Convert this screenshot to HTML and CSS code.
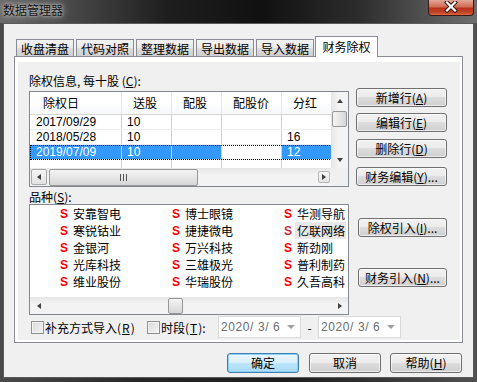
FILE: index.html
```html
<!DOCTYPE html>
<html lang="zh-CN">
<head>
  <meta charset="UTF-8" />
  <title>数据管理器</title>
  <link rel="stylesheet" href="styles.css">
</head>
<body>

<div class="window">
  <div class="titlebar">
    <span class="title">数据管理器</span>
    <div class="close">
      <svg width="14" height="12" viewBox="0 0 14 12">
        <path d="M3 1.5 L11 9.5 M11 1.5 L3 9.5" stroke="#3a1a14" stroke-width="4.2" stroke-linecap="square"/>
        <path d="M3 1.5 L11 9.5 M11 1.5 L3 9.5" stroke="#fff" stroke-width="2.2" stroke-linecap="square"/>
      </svg>
    </div>
  </div>

  <div class="client">
    <div class="tabs">
      <div class="tab">收盘清盘</div>
      <div class="tab">代码对照</div>
      <div class="tab">整理数据</div>
      <div class="tab">导出数据</div>
      <div class="tab">导入数据</div>
      <div class="tab active">财务除权</div>
    </div>

    <div class="pane">
      <div class="panel">
        <div class="main">
          <div class="left">
            <div class="label">除权信息, 每十股 (<u>C</u>):</div>

            <div class="listview">
              <div class="lv-main">
                <div class="lv-content">
                  <div class="lv-row head">
                    <span>除权日</span><span>送股</span><span>配股</span><span>配股价</span><span>分红</span>
                  </div>
                  <div class="lv-row">
                    <span>2017/09/29</span><span>10</span><span></span><span></span><span></span>
                  </div>
                  <div class="lv-row">
                    <span>2018/05/28</span><span>10</span><span></span><span></span><span>16</span>
                  </div>
                  <div class="lv-row sel">
                    <span>2019/07/09</span><span>10</span><span></span><span class="plain"></span><span>12</span>
                  </div>
                  <div class="lv-row">
                    <span></span><span></span><span></span><span></span><span></span>
                  </div>
                </div>
                <div class="vscroll">
                  <div class="sb-btn"><i class="ar-up"></i></div>
                  <div class="thumb-v"></div>
                  <div class="sb-fill"></div>
                  <div class="sb-btn"><i class="ar-down"></i></div>
                </div>
              </div>
              <div class="lv-bottom">
                <div class="hscroll">
                  <div class="sb-btn boxed"><i class="ar-left"></i></div>
                  <div class="thumb-h"><i class="grip"></i></div>
                  <div class="sb-fill"></div>
                  <div class="sb-btn small"><i class="ar-right"></i></div>
                </div>
                <div class="corner"></div>
              </div>
            </div>

            <div class="label second">品种(<u>S</u>):</div>

            <div class="stocklist">
              <div class="sl-items">
                <div class="item"><b>S</b><span>安靠智电</span></div>
                <div class="item"><b>S</b><span>寒锐钴业</span></div>
                <div class="item"><b>S</b><span>金银河</span></div>
                <div class="item"><b>S</b><span>光库科技</span></div>
                <div class="item"><b>S</b><span>维业股份</span></div>
                <div class="item"><b>S</b><span>博士眼镜</span></div>
                <div class="item"><b>S</b><span>捷捷微电</span></div>
                <div class="item"><b>S</b><span>万兴科技</span></div>
                <div class="item"><b>S</b><span>三雄极光</span></div>
                <div class="item"><b>S</b><span>华瑞股份</span></div>
                <div class="item"><b>S</b><span>华测导航</span></div>
                <div class="item hover"><b>S</b><span>亿联网络</span></div>
                <div class="item"><b>S</b><span>新劲刚</span></div>
                <div class="item"><b>S</b><span>普利制药</span></div>
                <div class="item"><b>S</b><span>久吾高科</span></div>
              </div>
              <div class="hscroll flat">
                <div class="sb-btn"><i class="ar-left"></i></div>
                <div class="sb-fill grow1"></div>
                <div class="thumb-small"></div>
                <div class="sb-fill"></div>
                <div class="sb-btn"><i class="ar-right"></i></div>
              </div>
            </div>
          </div>

          <div class="side">
            <div class="btn b1">新增行(<u>A</u>)</div>
            <div class="btn b2">编辑行(<u>E</u>)</div>
            <div class="btn b3">删除行(<u>D</u>)</div>
            <div class="btn b4">财务编辑(<u>Y</u>)...</div>
            <div class="btn b5">除权引入(<u>I</u>)...</div>
            <div class="btn b6">财务引入(<u>N</u>)...</div>
          </div>
        </div>

        <div class="options">
          <label class="check c1"><span class="box"></span>补充方式导入(<u>R</u>)</label>
          <label class="check c2"><span class="box"></span>时段(<u>T</u>):</label>
          <div class="date"><span class="val">2020/ 3/ 6</span><i class="dd"></i></div>
          <span class="dash">-</span>
          <div class="date"><span class="val">2020/ 3/ 6</span><i class="dd"></i></div>
        </div>
      </div>
    </div>

    <div class="actions">
      <div class="btn default">确定</div>
      <div class="btn">取消</div>
      <div class="btn">帮助(<u>H</u>)</div>
    </div>
  </div>
</div>

</body>
</html>
```

FILE: styles.css
```css
body {
  margin: 0;
  background: #1e1e1e;
  font-family: "Noto Sans CJK SC", "Noto Sans", sans-serif;
  font-size: 12px;
  color: #000;
}

u {
  text-decoration: underline;
}

.window {
  width: 477px;
  height: 382px;
  display: flex;
  flex-direction: column;
  background: linear-gradient(to right, #4a4a4a 0%, #262626 30%, #1c1c1c 60%, #505050 100%);
  overflow: hidden;
}

/* title bar */
.titlebar {
  height: 23px;
  display: flex;
  align-items: flex-start;
  background: linear-gradient(to right, #6a6a6a 0%, #4e4e4e 12%, #1e1e1e 35%, #111 55%, #2c2c2c 75%, #6e6e6e 100%);
}

.title {
  padding: 2px 0 0 3px;
  line-height: 16px;
  color: #111;
  text-shadow: 0 0 3px #d0d0d0, 0 0 6px #b0b0b0, 0 0 10px #999;
}

.close {
  margin-left: auto;
  margin-right: 3px;
  width: 46px;
  height: 16px;
  box-sizing: border-box;
  border: 1px solid #3b1a14;
  border-top: none;
  border-radius: 0 0 4px 4px;
  background: linear-gradient(#e2a898 0%, #d06c54 45%, #b8321a 55%, #c24628 85%, #de6a4a 100%);
  display: flex;
  justify-content: center;
  padding-top: 1px;
}

/* client area */
.client {
  margin: 0 3px;
  height: 355px;
  box-sizing: border-box;
  border: 1px solid #5a5a5a;
  background: #f0f0f0;
  display: flex;
  flex-direction: column;
}

.tabs {
  display: flex;
  align-items: flex-end;
  height: 20px;
  margin: 12px 0 0 10px;
  padding-left: 2px;
  position: relative;
  z-index: 1;
}

.tab {
  width: 58px;
  height: 17px;
  margin-right: 2px;
  box-sizing: border-box;
  border: 1px solid #898c95;
  border-bottom: none;
  background: linear-gradient(#f2f2f2, #ebebeb 50%, #dddddd 51%, #cfcfcf);
  text-align: center;
  line-height: 18px;
}

.tab.active {
  width: 63px;
  height: 21px;
  margin-left: -1px;
  margin-bottom: -1px;
  background: #fff;
  line-height: 20px;
}

.pane {
  margin-left: 10px;
  width: 449px;
  height: 287px;
  box-sizing: border-box;
  border: 1px solid #898c95;
  background: #fff;
  padding: 5px 2px 2px 3px;
}

.panel {
  height: 100%;
  box-sizing: border-box;
  background: #f0f0f0;
  padding: 12px 0 0 11px;
}

.main {
  display: flex;
}

.left {
  width: 320px;
}

.label {
  height: 14px;
  line-height: 14px;
  margin-bottom: 3px;
}

.label.second {
  margin-top: 3px;
  margin-bottom: 0;
}

/* list view */
.listview {
  height: 96px;
  box-sizing: border-box;
  border: 1px solid #828790;
  background: #fff;
  display: flex;
  flex-direction: column;
}

.lv-main {
  display: flex;
  height: 76px;
}

.lv-content {
  width: 301px;
  overflow: hidden;
}

.lv-row {
  display: flex;
  height: 15px;
  width: 312px;
  box-sizing: border-box;
  border-bottom: 1px solid #ececec;
}

.lv-row span {
  flex: none;
  box-sizing: border-box;
  border-right: 1px solid #cfcfcf;
  padding-left: 5px;
  font-family: "Liberation Sans", sans-serif;
  line-height: 14px;
  white-space: nowrap;
}

.lv-row span:nth-child(1) { width: 92px; padding-left: 6px; }
.lv-row span:nth-child(2) { width: 50px; }
.lv-row span:nth-child(3) { width: 50px; }
.lv-row span:nth-child(4) { width: 60px; }
.lv-row span:nth-child(5) { width: 60px; }

.lv-row.head {
  height: 23px;
  border-bottom: 1px solid #d5d5d5;
  background: linear-gradient(#fff, #fff 50%, #f6f7f9);
}

.lv-row.head span {
  border-right: 1px solid #e3e4e6;
  font-family: "Noto Sans CJK SC", sans-serif;
  line-height: 22px;
  padding-left: 11px;
}

.lv-row.head span:nth-child(1) {
  padding-left: 13px;
}

.lv-row.sel {
  outline: 1px dotted #000;
  outline-offset: -1px;
}

.lv-row.sel span {
  background: #3399ff;
  color: #fff;
}

.lv-row.sel span.plain {
  background: #fff;
}

/* scroll bars */
.vscroll {
  width: 17px;
  display: flex;
  flex-direction: column;
  background: linear-gradient(to right, #e6e6e6, #f3f3f3 40%, #f3f3f3);
}

.sb-btn {
  flex: none;
  width: 17px;
  height: 17px;
  display: flex;
  align-items: center;
  justify-content: center;
}

.sb-fill {
  flex: 1;
}

.thumb-v {
  height: 16px;
  margin: 2px 1px 0;
  box-sizing: border-box;
  border: 1px solid #979797;
  border-radius: 2px;
  background: linear-gradient(to right, #f4f4f4, #e6e6e6 50%, #d6d6d6);
}

.ar-up, .ar-down, .ar-left, .ar-right {
  display: block;
  width: 0;
  height: 0;
}

.ar-up {
  border-left: 3.5px solid transparent;
  border-right: 3.5px solid transparent;
  border-bottom: 4px solid #404040;
}

.ar-down {
  border-left: 3.5px solid transparent;
  border-right: 3.5px solid transparent;
  border-top: 4px solid #404040;
}

.ar-left {
  border-top: 3.5px solid transparent;
  border-bottom: 3.5px solid transparent;
  border-right: 4px solid #404040;
}

.ar-right {
  border-top: 3.5px solid transparent;
  border-bottom: 3.5px solid transparent;
  border-left: 4px solid #404040;
}

.lv-bottom {
  display: flex;
  height: 18px;
}

.hscroll {
  width: 301px;
  display: flex;
  align-items: center;
  background: linear-gradient(#e6e6e6, #f3f3f3 40%, #f3f3f3);
}

.hscroll .sb-btn.boxed {
  width: 16px;
  height: 16px;
  margin-left: 1px;
  box-sizing: border-box;
  border: 1px solid #a8a8a8;
  border-radius: 2px;
  background: linear-gradient(#f6f6f6, #e2e2e2);
}

.hscroll .sb-btn.small {
  width: 12px;
  height: 12px;
  margin-right: 1px;
  box-sizing: border-box;
  border: 1px solid #b8b8b8;
  border-radius: 2px;
  background: linear-gradient(#f8f8f8, #e4e4e4);
}

.thumb-h {
  width: 149px;
  height: 17px;
  margin-left: 2px;
  box-sizing: border-box;
  border: 1px solid #979797;
  border-radius: 2px;
  background: linear-gradient(#f4f4f4, #e6e6e6 50%, #d6d6d6);
  display: flex;
  align-items: center;
  justify-content: center;
}

.grip {
  width: 7px;
  height: 7px;
  background: repeating-linear-gradient(to right, #555 0, #555 1px, transparent 1px, transparent 3px);
}

.corner {
  width: 17px;
  background: #f0f0f0;
}

/* stock list */
.stocklist {
  height: 111px;
  box-sizing: border-box;
  border: 1px solid #828790;
  background: #fff;
  display: flex;
  flex-direction: column;
}

.sl-items {
  height: 92px;
  overflow: hidden;
  display: grid;
  grid-template-columns: repeat(3, 112px);
  grid-template-rows: repeat(5, 17px);
  grid-auto-flow: column;
  padding-left: 30px;
}

.item {
  display: flex;
  align-items: center;
  white-space: nowrap;
}

.item b {
  width: 13px;
  font-family: "Liberation Sans", sans-serif;
  font-weight: bold;
  font-size: 12px;
  color: #f00;
}

.item.hover b {
  color: #c0304a;
}

.item.hover span {
  background: #e8e8e8;
  margin-left: -2px;
  padding: 0 2px;
  line-height: 17px;
  width: 47px;
}

.hscroll.flat {
  width: auto;
  height: 17px;
}

.grow1 {
  flex: 0 0 121px;
}

.thumb-small {
  width: 15px;
  height: 16px;
  box-sizing: border-box;
  border: 1px solid #979797;
  border-radius: 2px;
  background: linear-gradient(#f4f4f4, #e6e6e6 50%, #d6d6d6);
}

/* buttons */
.side {
  width: 91px;
  margin-left: 7px;
  padding-top: 14px;
}

.btn {
  height: 19px;
  box-sizing: border-box;
  border: 1px solid #707070;
  border-radius: 3px;
  background: linear-gradient(#f2f2f2 0%, #ebebeb 49%, #dddddd 50%, #cfcfcf 100%);
  box-shadow: inset 0 0 0 1px rgba(255, 255, 255, 0.6);
  line-height: 17px;
  text-align: center;
  white-space: nowrap;
  overflow: hidden;
}

.side .b2 { margin-top: 6px; }
.side .b3 { margin-top: 7px; }
.side .b4 { margin-top: 9px; }
.side .b5 { margin: 32px 0 0 2px; }
.side .b6 { margin: 31px 0 0 2px; }

/* bottom options */
.options {
  display: flex;
  align-items: center;
  height: 22px;
  margin-top: 1px;
  padding-left: 2px;
}

.check {
  display: flex;
  align-items: center;
  gap: 1px;
  white-space: nowrap;
}

.check.c1 { width: 116px; }
.check.c2 { width: 71px; }

.box {
  width: 13px;
  height: 13px;
  box-sizing: border-box;
  border: 1px solid #8e8f8f;
  background: linear-gradient(135deg, #d8d8d8, #f6f6f6);
  box-shadow: inset 0 0 0 1px #f4f4f4;
}

.date {
  width: 83px;
  height: 22px;
  box-sizing: border-box;
  border: 1px solid #d9d9d9;
  background: #fff;
  display: flex;
  align-items: center;
  padding-left: 2px;
  color: #6d6d6d;
}

.date .val {
  white-space: pre;
  font-family: "Liberation Sans", sans-serif;
  letter-spacing: 0.6px;
}

.date .dd {
  margin: 0 5px 0 auto;
  width: 0;
  height: 0;
  border-left: 4px solid transparent;
  border-right: 4px solid transparent;
  border-top: 4px solid #a0a0a0;
}

.dash {
  width: 17px;
  text-align: center;
}

/* dialog buttons */
.actions {
  display: flex;
  justify-content: flex-end;
  margin-top: 10px;
  padding-right: 11px;
}

.actions .btn {
  width: 72px;
  height: 20px;
  line-height: 18px;
  margin-left: 9px;
}

.actions .btn:first-child {
  margin-left: 0;
}

.actions .btn:nth-child(2) {
  margin-left: 10px;
}

.btn.default {
  border-color: #3c7fb1;
  background: linear-gradient(#eaf6fd 0%, #d9f0fc 49%, #bee6fd 50%, #a7d9f5 100%);
  box-shadow: inset 0 0 0 1px #8fd1f5;
}
```
